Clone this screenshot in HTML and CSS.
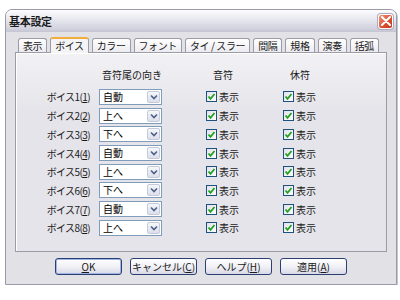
FILE: index.html
```html
<!DOCTYPE html>
<html lang="ja">
<head>
    <meta charset="UTF-8">
    <title>基本設定</title>
    <link rel="stylesheet" href="styles.css">
</head>
<body>
    <div class="window">
        <div class="titlebar">
            <span class="title">基本設定</span>
            <span class="close">
                <svg width="10" height="10" viewBox="0 0 10 10"><path d="M1 1 L9 9 M9 1 L1 9" stroke="#fff" stroke-width="2" stroke-linecap="round"/></svg>
            </span>
        </div>

        <div class="body">
            <!-- Tabs -->
            <div class="tabs">
                <div class="tab">表示</div>
                <div class="tab active">ボイス</div>
                <div class="tab">カラー</div>
                <div class="tab">フォント</div>
                <div class="tab">タイ / スラー</div>
                <div class="tab">間隔</div>
                <div class="tab">規格</div>
                <div class="tab">演奏</div>
                <div class="tab">括弧</div>
            </div>

            <div class="panel">
                <div class="grid" id="grid">
                    <div class="head head-dir">音符尾の向き</div>
                    <div class="head head-note">音符</div>
                    <div class="head head-rest">休符</div>
                </div>
            </div>

            <div class="buttons">
                <div class="btn default"><u>O</u>K</div>
                <div class="btn">キャンセル(<u>C</u>)</div>
                <div class="btn">ヘルプ(<u>H</u>)</div>
                <div class="btn">適用(<u>A</u>)</div>
            </div>
        </div>
    </div>

    <script>
        const dirs = ['自動', '上へ', '下へ', '自動', '上へ', '下へ', '自動', '上へ'];
        const grid = document.getElementById('grid');
        const check = '<span class="box"><svg width="9" height="9" viewBox="0 0 9 9"><path d="M1.5 4.5 L3.5 6.8 L7.5 2" fill="none" stroke="#21a121" stroke-width="1.8"/></svg></span>';
        const arrow = '<span class="drop"><svg width="8" height="6" viewBox="0 0 8 6"><path d="M1 1.5 L4 4.5 L7 1.5" fill="none" stroke="#4d6185" stroke-width="1.6"/></svg></span>';

        dirs.forEach((dir, i) => {
            const n = i + 1;
            grid.insertAdjacentHTML('beforeend',
                `<div class="label">ボイス${n}(<u>${n}</u>)</div>` +
                `<div><div class="select"><span class="value">${dir}</span>${arrow}</div></div>` +
                `<div class="check">${check}表示</div>` +
                `<div class="check">${check}表示</div>`);
        });
    </script>
</body>
</html>
```

FILE: styles.css
```css
body {
    margin: 0;
    background-color: #ffffff;
    font-family: "Noto Sans CJK JP", "Noto Sans", sans-serif;
    font-size: 10px;
    color: #000000;
}

.window {
    margin: 9px 0 0 5px;
    width: 390px;
    height: 274px;
    border: 1px solid #9a9aaa;
    border-radius: 7px 7px 0 0;
    background-color: #e2e1e6;
    display: flex;
    flex-direction: column;
    box-shadow: 1px 1px 0 #c5c5cf;
}

.titlebar {
    height: 22px;
    display: flex;
    align-items: center;
    justify-content: space-between;
    padding: 0 3px 0 3px;
    border-radius: 6px 6px 0 0;
    background: linear-gradient(#fdfdfe, #e9e9f0 40%, #d2d2df 85%, #c4c4d2);
}

.title {
    font-size: 11px;
    font-weight: bold;
    color: #1a1a1a;
    letter-spacing: -0.3px;
}

.close {
    width: 13px;
    height: 13px;
    border: 1px solid #ffffff;
    border-radius: 3px;
    background: linear-gradient(135deg, #f29a80, #d84d2e 60%, #c0391c);
    display: flex;
    align-items: center;
    justify-content: center;
    box-shadow: 0 0 0 1px #b0a9b8;
}

.body {
    flex: 1;
    padding: 4px 9px 0 9px;
    display: flex;
    flex-direction: column;
}

/* Tabs */
.tabs {
    display: flex;
    align-items: flex-end;
    gap: 3px;
    height: 16px;
    padding-left: 3px;
}

.tab {
    flex-shrink: 0;
    white-space: nowrap;
    height: 13px;
    line-height: 13px;
    padding: 0 4px;
    border: 1px solid #9c9ca8;
    border-bottom: none;
    border-radius: 3px 3px 0 0;
    background: linear-gradient(#ffffff, #ecebf0);
    color: #1a1a1a;
    letter-spacing: -0.4px;
}

.tab.active {
    height: 14px;
    line-height: 14px;
    background: #f4f4f6;
    border-top: 2px solid #f1ae3b;
    margin-bottom: -1px;
    position: relative;
    z-index: 1;
}

.panel {
    height: 198px;
    border: 1px solid #9c9ca8;
    background: linear-gradient(#f2f2f5, #e5e4ea 30%, #e5e4ea);
    box-shadow: inset 1px 1px 0 #ffffff;
}

.grid {
    display: grid;
    grid-template-columns: 83px 107px 77px 77px;
    grid-template-rows: 20.6px repeat(8, 18.7px);
    align-items: center;
    padding-top: 14px;
}

.head {
    align-self: start;
    line-height: 16px;
    color: #1a1a1a;
}

.head-dir {
    grid-column: 2;
    padding-left: 3px;
}

.head-note {
    grid-column: 3;
    padding-left: 7px;
}

.head-rest {
    grid-column: 4;
    padding-left: 7px;
}

.label {
    text-align: right;
    padding-right: 9px;
    letter-spacing: -0.6px;
    color: #1a1a1a;
}

.select {
    width: 61px;
    height: 14px;
    border: 1px solid #7f9db9;
    background: #ffffff;
    display: flex;
    align-items: center;
    justify-content: space-between;
}

.value {
    padding-left: 3px;
    line-height: 14px;
}

.drop {
    width: 13px;
    height: 12px;
    margin-right: 1px;
    border: 1px solid #c3cadb;
    border-radius: 2px;
    box-sizing: border-box;
    background: linear-gradient(#f6f7fb, #dcdfec);
    display: flex;
    align-items: center;
    justify-content: center;
}

.check {
    display: flex;
    align-items: center;
    gap: 2px;
    color: #1a1a1a;
}

.box {
    width: 9px;
    height: 9px;
    border: 1px solid #1c5180;
    background: linear-gradient(135deg, #e0e0e8, #ffffff);
    display: flex;
    align-items: center;
    justify-content: center;
}

/* Buttons */
.buttons {
    display: flex;
    justify-content: center;
    gap: 8px;
    margin-top: 6px;
}

.btn {
    width: 65px;
    height: 15px;
    line-height: 15px;
    text-align: center;
    border: 1px solid #2b3f75;
    border-radius: 3px;
    background: linear-gradient(#ffffff, #f1f1f6 50%, #d8d9e6);
    color: #1a1a1a;
}

.btn.default {
    box-shadow: inset 0 0 0 1px #9fb6e4;
}
```
